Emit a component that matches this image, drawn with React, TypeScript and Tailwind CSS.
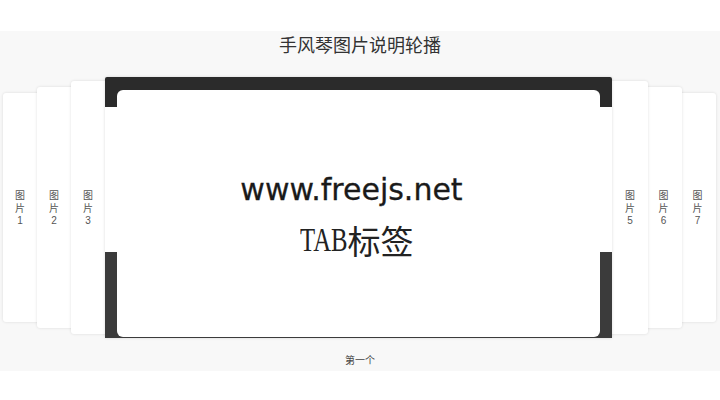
import React from "react";

const cjk = '"Noto Sans CJK SC", "Liberation Sans", sans-serif';

function SideCard({ n, cls }: { n: number; cls: string }) {
  return (
    <div
      className={`relative shrink-0 ${cls} rounded-[3px] bg-white shadow-[0_0_3px_rgba(0,0,0,0.12)] flex items-center justify-center`}
    >
      <div
        className="flex flex-col items-center text-[10px] leading-[13px] text-[#555]"
        style={{ fontFamily: cjk }}
      >
        <span className="block h-[13px]">图</span>
        <span className="block h-[13px]">片</span>
        <span className="block h-[13px]" style={{ fontFamily: '"Liberation Sans", sans-serif' }}>
          {n}
        </span>
      </div>
    </div>
  );
}

export default function App() {
  return (
    <div className="w-[720px] h-[400px] bg-white overflow-hidden">
      <div className="h-[31px]" />
      <div className="h-[340px] bg-[#f8f8f8] flex flex-col">
        <div
          className="h-[27px] flex items-center justify-center text-[18px] text-[#333]"
          style={{ fontFamily: cjk }}
        >
          手风琴图片说明轮播
        </div>
        <div className="h-[19px]" />
        <div className="h-[261px] flex items-center justify-start">
          <SideCard n={1} cls="z-[1] ml-[3px] w-[40px] h-[229px] pr-[6px]" />
          <SideCard n={2} cls="z-[2] -ml-[6px] w-[40px] h-[241px] pr-[6px]" />
          <SideCard n={3} cls="z-[3] -ml-[6px] w-[40px] h-[253px] pr-[6px]" />
          <div className="relative shrink-0 z-[10] -ml-[6px] w-[507px] h-[261px] rounded-t-[2px] bg-[linear-gradient(to_bottom,#2b2b2b_0px,#2b2b2b_30px,#ffffff_30px,#ffffff_175px,#3b3b3b_175px,#3b3b3b_100%)] shadow-[0_0_3px_rgba(0,0,0,0.15)] flex pt-[13px] px-[12px] pb-[1px]">
            <div className="flex-1 rounded-[6px] bg-white flex flex-col items-center pt-[82px]">
              <div
                className="mr-[14px] text-[30px] leading-[36px] text-[#1a1a1a] [-webkit-text-stroke:0.3px_#1a1a1a]"
                style={{ fontFamily: '"DejaVu Sans", Verdana, sans-serif' }}
              >
                www.freejs.net
              </div>
              <div
                className="mt-[13px] mr-[4px] flex items-center text-[33px] leading-[38px] text-[#222]"
                style={{ fontFamily: '"Liberation Serif", "Noto Sans CJK SC", serif' }}
              >
                <span className="inline-block w-[48px]">
                  <span className="inline-block origin-left scale-x-[0.75]">TAB</span>
                </span>
                <span style={{ fontFamily: cjk }} className="text-[33px]">
                  标签
                </span>
              </div>
            </div>
          </div>
          <SideCard n={5} cls="z-[3] -ml-[6px] w-[42px] h-[253px] pl-[6px]" />
          <SideCard n={6} cls="z-[2] -ml-[6px] w-[40px] h-[241px] pl-[3px]" />
          <SideCard n={7} cls="z-[1] -ml-[6px] w-[40px] h-[229px] pl-[3px]" />
        </div>
        <div
          className="flex-1 flex items-center justify-center pt-[9px] text-[10px] text-[#444]"
          style={{ fontFamily: cjk }}
        >
          第一个
        </div>
      </div>
    </div>
  );
}
